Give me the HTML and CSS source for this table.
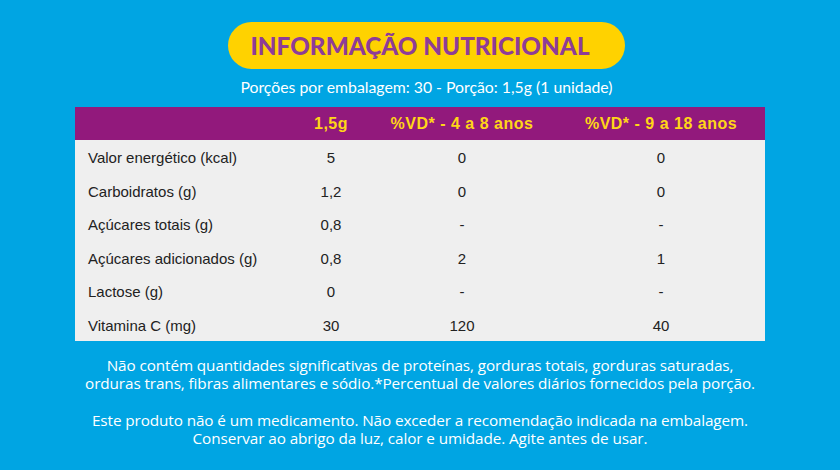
FILE: index.html
```html
<!DOCTYPE html>
<html lang="pt">
<head>
<meta charset="utf-8">
<link rel="stylesheet" href="styles.css">
</head>
<body>
<main class="page">
  <div class="pill"><h1 class="title">INFORMAÇÃO NUTRICIONAL</h1></div>
  <p class="sub">Porções por embalagem: 30 - Porção: 1,5g (1 unidade)</p>
  <div class="table">
    <div class="row head">
      <span></span><span class="c">1,5g</span><span class="c">%VD* - 4 a 8 anos</span><span class="c">%VD* - 9 a 18 anos</span>
    </div>
    <div class="row"><span class="l">Valor energético (kcal)</span><span class="c">5</span><span class="c">0</span><span class="c">0</span></div>
    <div class="row"><span class="l">Carboidratos (g)</span><span class="c">1,2</span><span class="c">0</span><span class="c">0</span></div>
    <div class="row"><span class="l">Açúcares totais (g)</span><span class="c">0,8</span><span class="c">-</span><span class="c">-</span></div>
    <div class="row"><span class="l">Açúcares adicionados (g)</span><span class="c">0,8</span><span class="c">2</span><span class="c">1</span></div>
    <div class="row"><span class="l">Lactose (g)</span><span class="c">0</span><span class="c">-</span><span class="c">-</span></div>
    <div class="row"><span class="l">Vitamina C (mg)</span><span class="c">30</span><span class="c">120</span><span class="c">40</span></div>
  </div>
  <p class="note">Não contém quantidades significativas de proteínas, gorduras totais, gorduras saturadas,<br>orduras trans, fibras alimentares e sódio.*Percentual de valores diários fornecidos pela porção.</p>
  <p class="note">Este produto não é um medicamento. Não exceder a recomendação indicada na embalagem.<br>Conservar ao abrigo da luz, calor e umidade. Agite antes de usar.</p>
</main>
</body>
</html>
```
FILE: styles.css
```css
* { box-sizing: border-box; }
html, body { margin: 0; padding: 0; }
body {
  width: 840px;
  height: 470px;
  background: #00a5e3;
  overflow: hidden;
  font-family: "Lato", "Open Sans", sans-serif;
}
.page {
  display: flex;
  flex-direction: column;
  align-items: center;
  padding-top: 22px;
}
.pill {
  width: 397px;
  height: 47px;
  margin-left: 13px;
  border-radius: 24px;
  background: #ffd200;
  display: flex;
  align-items: center;
  justify-content: center;
}
.title {
  margin: 0 0 0 -13px;
  font-family: "Lato", sans-serif;
  font-weight: 900;
  font-size: 24.3px;
  letter-spacing: 0;
  color: #8e3c98;
}
.sub {
  margin: 9px 0 0 13px;
  color: #fff;
  font-size: 15.8px;
  line-height: 18px;
}
.table {
  margin-top: 11px;
  width: 690px;
  background: #efefef;
  font-family: "Liberation Sans", Arial, sans-serif;
  font-size: 15px;
  color: #222;
}
.row {
  display: grid;
  grid-template-columns: 220px 72px 190px 208px;
  height: 33.5px;
  padding-top: 2px;
  align-items: center;
}
.row.head {
  height: 33px;
  padding-top: 0;
  background: #92197c;
  color: #ffd617;
  font-weight: bold;
  font-size: 16px;
  letter-spacing: 0.5px;
}
.l { padding-left: 13px; }
.c { text-align: center; }
.note {
  margin: 15px 0 0 0;
  color: #fff;
  font-family: "Open Sans", sans-serif;
  font-size: 15.3px;
  line-height: 18px;
  text-align: center;
  letter-spacing: -0.1px;
}
.note + .note { margin-top: 19px; }
```
